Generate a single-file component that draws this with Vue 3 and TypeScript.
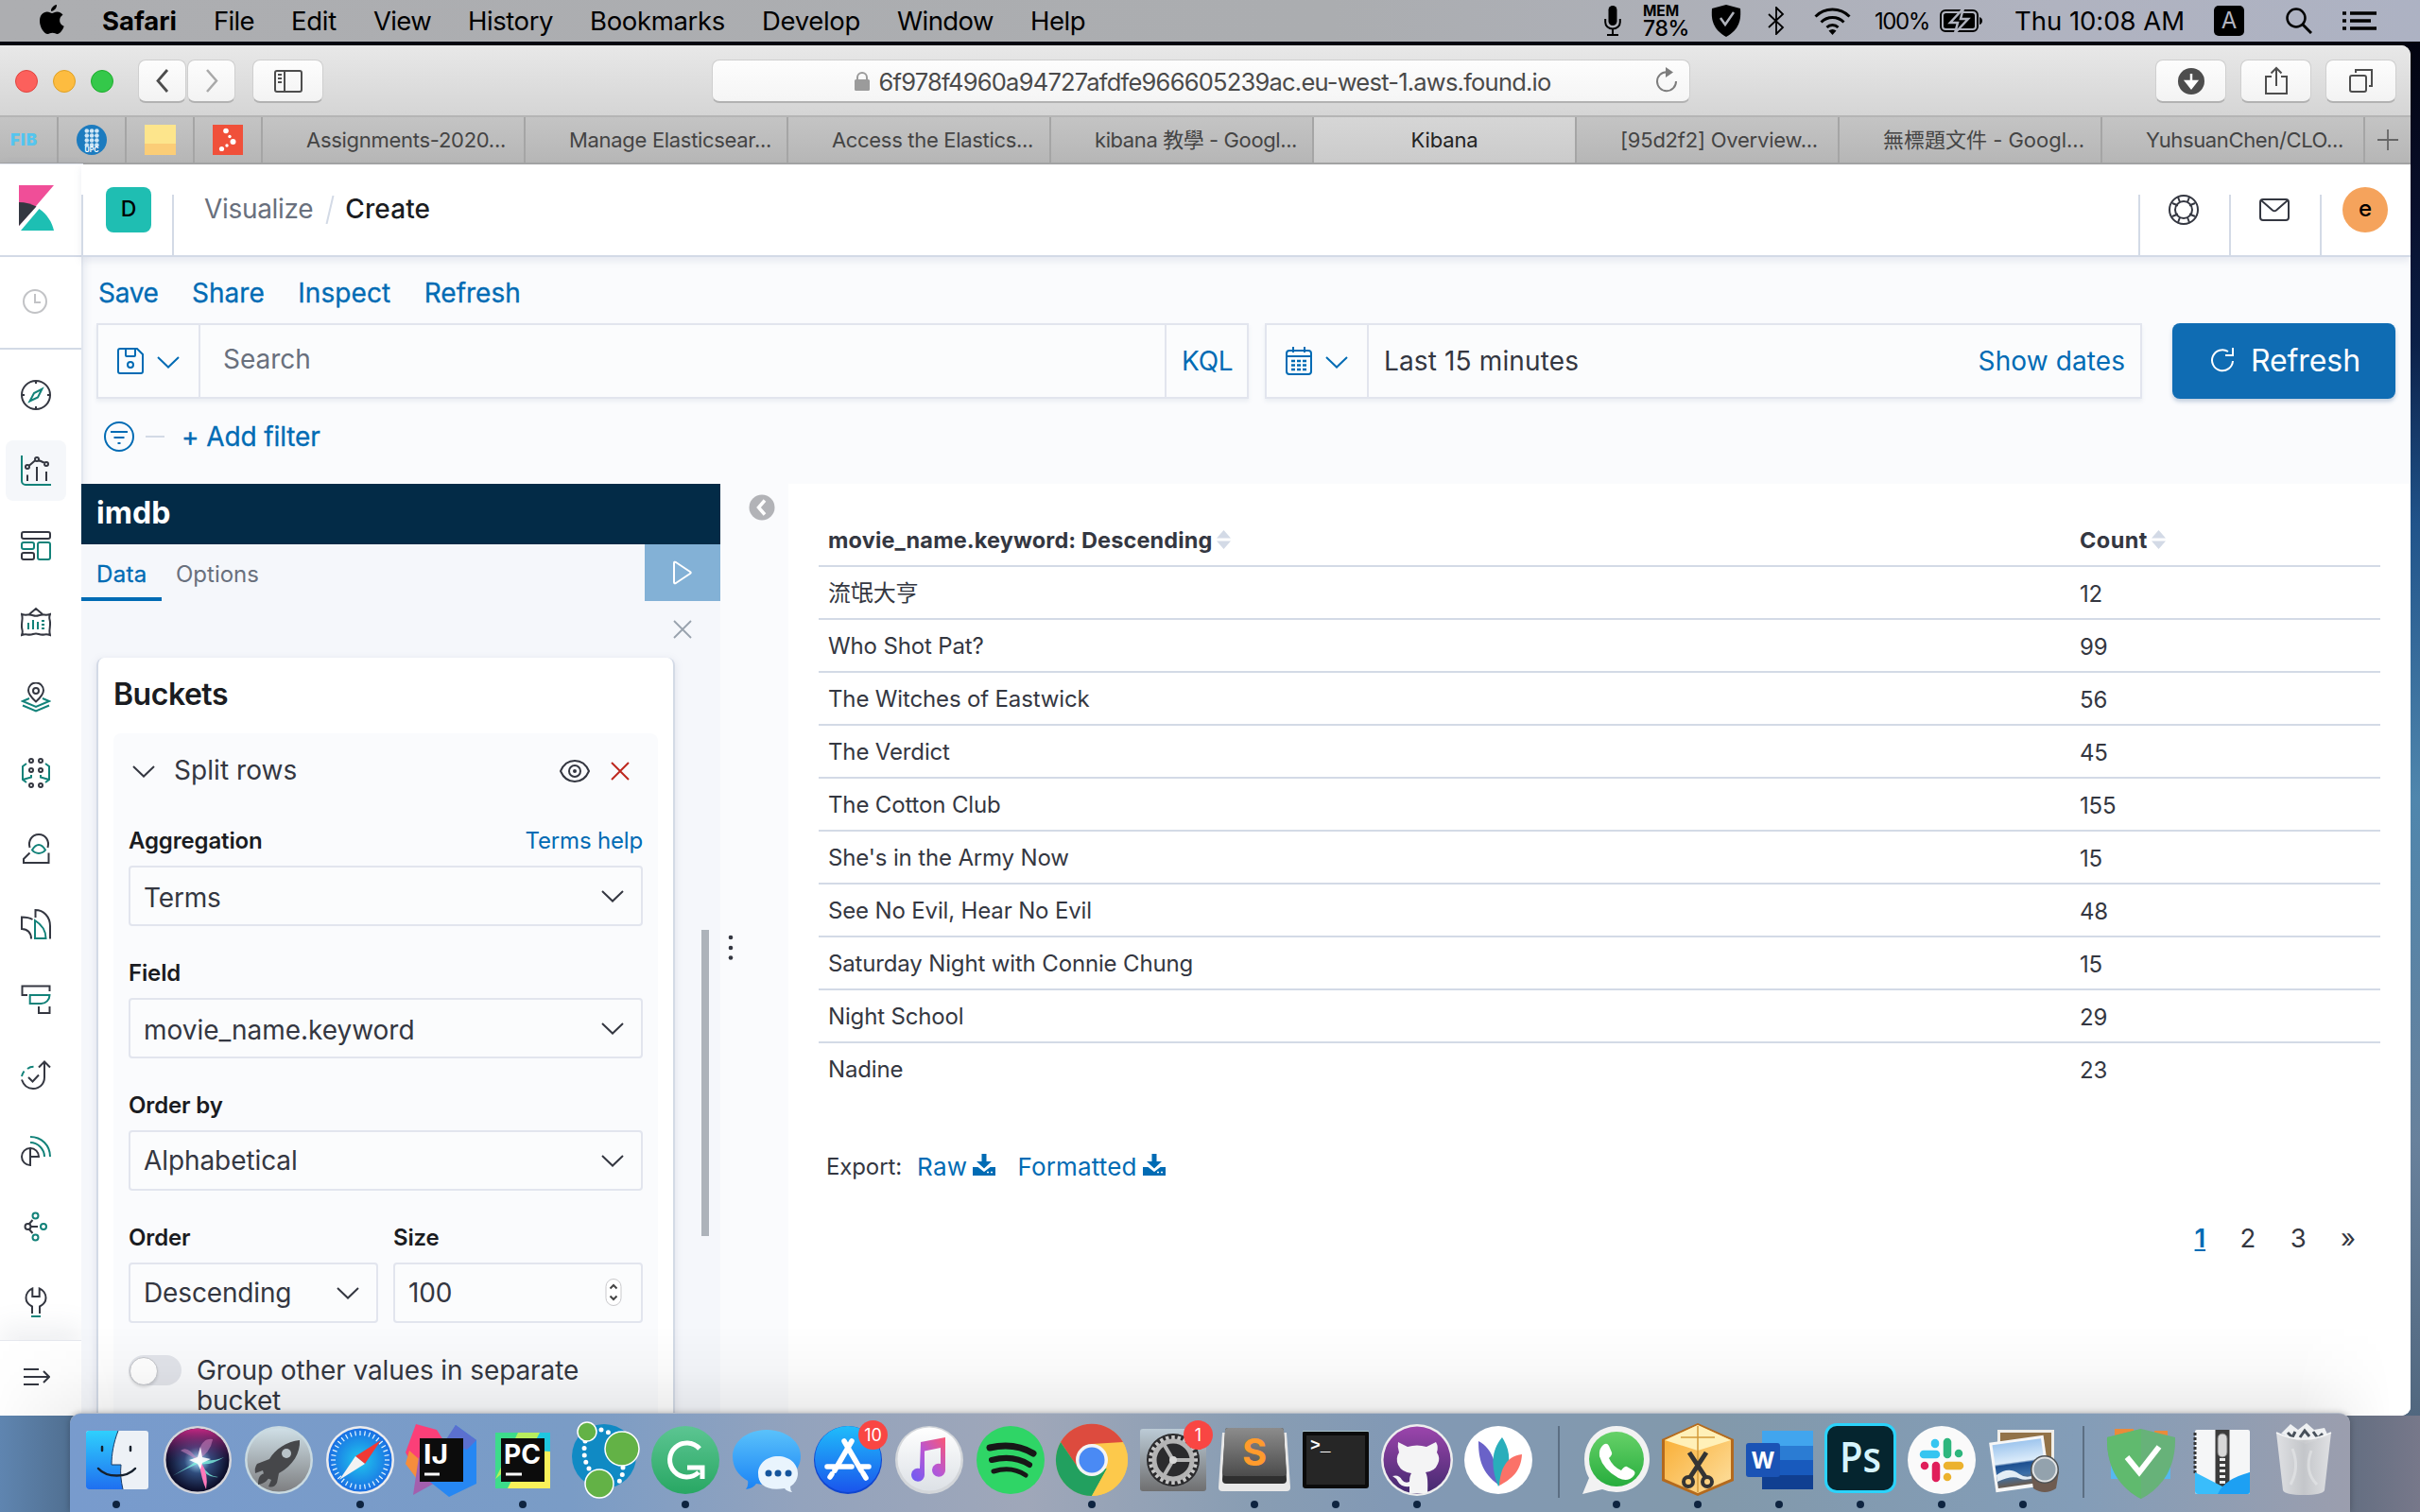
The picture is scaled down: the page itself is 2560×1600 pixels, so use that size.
<script setup lang="ts">
import type { Directive } from 'vue'

// Tunes letter-spacing so that a label occupies the given width in pixels.
const vFit: Directive<HTMLElement, number> = {
  mounted(el, binding) {
    const range = document.createRange()
    range.selectNodeContents(el)
    const width = range.getBoundingClientRect().width
    const count = (el.textContent ?? '').trim().length
    if (count > 0 && width > 0) el.style.letterSpacing = `${(binding.value - width) / count}px`
  },
}

interface Label { text: string; w: number }

const menus: Label[] = [
  { text: 'File', w: 43 }, { text: 'Edit', w: 48 }, { text: 'View', w: 61 },
  { text: 'History', w: 90 }, { text: 'Bookmarks', w: 143 }, { text: 'Develop', w: 104 },
  { text: 'Window', w: 102 }, { text: 'Help', w: 58 },
]

const tabs: (Label & { active?: boolean })[] = [
  { text: 'Assignments-2020...', w: 211 },
  { text: 'Manage Elasticsear...', w: 214 },
  { text: 'Access the Elastics...', w: 213 },
  { text: 'kibana 教學 - Googl...', w: 214 },
  { text: 'Kibana', w: 71, active: true },
  { text: '[95d2f2] Overview...', w: 209 },
  { text: '無標題文件 - Googl...', w: 213 },
  { text: 'YuhsuanChen/CLO...', w: 209 },
]

const circ = (x: number, y: number, r: number): string =>
  `M${x - r} ${y}a${r} ${r} 0 1 0 ${2 * r} 0a${r} ${r} 0 1 0 ${-2 * r} 0z`

interface NavIcon { name: string; dark: string; teal: string; active?: boolean }

const navIcons: NavIcon[] = [
  { name: 'discover', dark: circ(16, 16, 15) + 'M16 1v3M16 28v3M1 16h3M28 16h3', teal: 'M22.5 9.5l-4.5 9-8.5 4 4.5-8.5z' },
  { name: 'visualize', active: true, dark: 'M7 20.500v6.500M17 12v15M27 17v10M8.500 11l7-6M19 5l6.500 3' + circ(7, 12, 2) + circ(17, 4, 2) + circ(27, 9, 2), teal: 'M1 0v27a4 4 0 0 0 4 4h27' },
  { name: 'dashboard', dark: 'M3 1h26a2 2 0 0 1 2 2v3a2 2 0 0 1-2 2H3a2 2 0 0 1-2-2V3a2 2 0 0 1 2-2zM3 23h9a2 2 0 0 1 2 2v3a2 2 0 0 1-2 2H3a2 2 0 0 1-2-2v-3a2 2 0 0 1 2-2z', teal: 'M3 12h9a2 2 0 0 1 2 2v3a2 2 0 0 1-2 2H3a2 2 0 0 1-2-2v-3a2 2 0 0 1 2-2zM20 12h9a2 2 0 0 1 2 2v14a2 2 0 0 1-2 2h-9a2 2 0 0 1-2-2V14a2 2 0 0 1 2-2z' },
  { name: 'canvas', dark: 'M9 8l7-6 7 6M1 8q3 1 6 .6t6 .6t6 0t6-.6t6-.6q-1.200 2.800-.5 5.500t.5 5.500t-.5 5.500t.5 5.500q-3-1.200-6-.6t-6-.4t-6 0t-6 .4t-6 .6q1.200-2.800.5-5.500t-.5-5.500t.5-5.500t-.5-5.500z', teal: 'M8 17v7M13 14v10M18 16v8M22 15h3M22 19h3M22 23h3' },
  { name: 'maps', dark: 'M16 20.500c-5-4.500-8-8-8-12a8 8 0 0 1 16 0c0 4-3 7.500-8 12z' + circ(16, 9, 3), teal: 'M9 17l-7 3 14 6 14-6-7-3M2 24.500l14 6 14-6' },
  { name: 'machine learning', dark: circ(11, 3, 2) + circ(21, 3, 2) + circ(11, 13, 2) + circ(21, 13, 2) + circ(11, 29, 2) + circ(21, 29, 2), teal: 'M6 6L2 9v14l4 3M2 23l9-2.500V18M26 6l4 3v14l-4 3M30 23l-9-2.500V18' },
  { name: 'metrics', dark: 'M9.500 15c-2-7 2-14 9.500-14s11.500 7 9.500 14M9.500 20.500L3 27v4h26.500V20.500', teal: 'M12 17.500c2-3.500 4-5.500 7-5.500s5 2 7 5.500c-3.500 4.500-10.500 4.500-14 0z' },
  { name: 'logs', dark: 'M15.500 9V1C24 1 31 8 31 18v13.500M12.500 11C9 9 5 8.500 1 8.500V21c6 0 10 4 10 10.500', teal: 'M15 12v19h11.500c0-8-5-15-11.500-19z' },
  { name: 'apm', dark: 'M30.500 7V1.500h-29v9.500H7M19 23v7h11.500v-7', teal: 'M9.700 11h20.800c0 5-4 9-9 9H9.700z' },
  { name: 'uptime', dark: 'M1 20.500c2 6 6 9.500 12 9.500 7 0 12-5 12-12V2M19 7.500l6-6 6 6M8 18l4.500 4.500 6.500-7', teal: 'M1 17c.5-2 1.500-4 2.500-5.500M7 9c2-1.500 4-2.200 6.500-2.200' },
  { name: 'siem', dark: 'M10 13a9 9 0 0 0 0 18zM10 13c5 0 9 4 9 9h-9', teal: 'M10 1c12 0 21 9 21 21M10 7c8 0 15 7 15 15' },
  { name: 'graph', dark: circ(7.5, 16, 3) + 'M10.500 16h7.500M9 13l3.500-4M9 19l3.500 4', teal: circ(15.5, 4.5, 3) + circ(24, 16, 3) + circ(15.5, 27.5, 3) },
  { name: 'dev tools', dark: 'M12 28v-7.500c-4-2-6.500-5-6.500-9 0-4.500 3-8.500 6.800-10V10h7.400V1.500c3.800 1.500 6.800 5.500 6.800 10 0 4-2.500 7-6.500 9V28', teal: 'M11 31h10' },
]

interface Row { name: string; count: number }
const rows: Row[] = [
  { name: '流氓大亨', count: 12 },
  { name: 'Who Shot Pat?', count: 99 },
  { name: 'The Witches of Eastwick', count: 56 },
  { name: 'The Verdict', count: 45 },
  { name: 'The Cotton Club', count: 155 },
  { name: "She's in the Army Now", count: 15 },
  { name: 'See No Evil, Hear No Evil', count: 48 },
  { name: 'Saturday Night with Connie Chung', count: 15 },
  { name: 'Night School', count: 29 },
  { name: 'Nadine', count: 23 },
]

interface Field { label: string; value: string; w: number; help?: string }
const fields: Field[] = [
  { label: 'Aggregation', value: 'Terms', w: 81, help: 'Terms help' },
  { label: 'Field', value: 'movie_name.keyword', w: 284 },
  { label: 'Order by', value: 'Alphabetical', w: 161 },
]

interface DockApp { id: string; running?: boolean; badge?: string }
const dockGroups: DockApp[][] = [
  [
    { id: 'finder', running: true }, { id: 'siri' }, { id: 'launchpad' }, { id: 'safari', running: true },
    { id: 'intellij' }, { id: 'pycharm', running: true }, { id: 'neo4j' }, { id: 'grammarly', running: true },
    { id: 'messages' }, { id: 'appstore', badge: '10' }, { id: 'music' }, { id: 'spotify' },
    { id: 'chrome', running: true }, { id: 'settings', badge: '1' }, { id: 'sublime', running: true },
    { id: 'terminal', running: true }, { id: 'github', running: true }, { id: 'lotus' },
  ],
  [
    { id: 'whatsapp', running: true }, { id: 'box', running: true }, { id: 'word', running: true },
    { id: 'photoshop', running: true }, { id: 'slack', running: true }, { id: 'preview', running: true },
  ],
  [{ id: 'adguard' }, { id: 'zip' }, { id: 'trash' }],
]

const ticks = Array.from({ length: 36 }, (_, i) => i * 10)
const teeth = Array.from({ length: 24 }, (_, i) => i * 15)
</script>

<template>
  <div class="desktop">
    <header class="menubar">
      <svg class="apple" viewBox="0 0 26 31" width="26" height="31"><path d="M18 0c.3 3.500-2.800 6.800-6 6.800C11.700 3.600 14.800.5 18 0zM13 9c1.300 0 3-1.500 5.500-1.500 2.700 0 4.800 1.300 6 3.200-5 3-4.200 10 1.200 12.100-1 3.200-4 8.200-7 8.200-2 0-2.800-1.200-5.200-1.200S10.300 31 8.500 31C4.500 31 0 23.500 0 17.200 0 11 3.800 7.600 7.800 7.600 10.200 7.600 11.800 9 13 9z" /></svg>
      <b v-fit="79">Safari</b>
      <span v-for="m in menus" :key="m.text" v-fit="m.w">{{ m.text }}</span>
      <div class="status">
        <svg width="18" height="32" viewBox="0 0 18 32"><rect x="4.500" y="0" width="9" height="21" rx="4.500" /><path d="M1.200 14v3.500a7.800 7 0 0 0 15.600 0V14M9 25v6M3 31h12" fill="none" stroke="#000" stroke-width="2" /></svg>
        <div class="mem"><b v-fit="38">MEM</b><em v-fit="49">78%</em></div>
        <svg width="32" height="34" viewBox="0 0 32 34"><path d="M16 0l15 4c1 12-1 22-15 30C2 26 0 16 1 4z" /><path d="M10 14l5 7 9-13" fill="none" stroke="#b0b3bb" stroke-width="2.500" /></svg>
        <svg class="bt" width="18" height="30" viewBox="0 0 18 30"><path d="M1 8l15 14-7 7V1l7 7L1 22" fill="none" stroke="#000" stroke-width="1.800" /></svg>
        <svg class="wifi" width="39" height="30" viewBox="0 0 39 30"><g fill="none" stroke="#000" stroke-width="3"><path d="M1.500 10.500a25.500 25.500 0 0 1 36 0M7.500 16.500a17 17 0 0 1 24 0M13.500 22a8.500 8.500 0 0 1 12 0" /></g><path d="M15.500 25.500q4-3 8 0l-4 4.500z" /></svg>
        <span class="pct" v-fit="58">100%</span>
        <svg class="bat" width="45" height="26" viewBox="0 0 45 26"><rect x="1" y="2" width="39" height="22" rx="5" fill="none" stroke="#000" stroke-width="2" /><path d="M42 9v8q3-1 3-4t-3-4z" /><rect x="4" y="5" width="33" height="16" rx="2.500" /><path d="M25 0L11 15h8l-3 11 14-15h-8z" stroke="#b0b3bf" stroke-width="2.500" /></svg>
        <span class="clock" v-fit="180">Thu 10:08 AM</span>
        <i class="ime">A</i>
        <svg class="find" width="28" height="28" viewBox="0 0 28 28"><circle cx="11" cy="11" r="9.500" fill="none" stroke="#000" stroke-width="2.500" /><path d="M18 18l9 9" stroke="#000" stroke-width="3" /></svg>
        <svg class="lst" width="36" height="20" viewBox="0 0 36 20"><path d="M0 2h4M8 2h28M0 10h4M8 10h22M0 18h4M8 18h28" stroke="#000" stroke-width="3.600" /></svg>
      </div>
    </header>

    <div class="window">
      <div class="toolbar">
        <i class="light red" /><i class="light yellow" /><i class="light green" />
        <div class="tbtn back"><svg width="16" height="26" viewBox="0 0 16 26"><path d="M13 1L3 12.500 13 24" fill="none" stroke="#4d4d4d" stroke-width="2.800" /></svg></div>
        <div class="tbtn fwd"><svg width="16" height="26" viewBox="0 0 16 26"><path d="M3 1l10 11.500L3 24" fill="none" stroke="#a9a9a9" stroke-width="2.500" /></svg></div>
        <div class="tbtn side"><svg width="30" height="24" viewBox="0 0 30 24"><g fill="none" stroke="#4d4d4d" stroke-width="2"><rect x="1" y="1" width="28" height="22" rx="2" /><path d="M11 1v22M4 5h4M4 9h4M4 13h4" /></g></svg></div>
        <div class="url">
          <svg width="18" height="20" viewBox="0 0 18 20"><path d="M4 9V6a5 5 0 0 1 10 0v3" fill="none" stroke="#9b9b9b" stroke-width="2" /><rect x="1" y="8" width="16" height="12" rx="1.500" fill="#9b9b9b" /></svg>
          <span v-fit="711">6f978f4960a94727afdfe966605239ac.eu-west-1.aws.found.io</span>
          <svg class="reload" width="24" height="27" viewBox="0 0 24 27"><path d="M12 5.200A10 10 0 1 0 22 15" fill="none" stroke="#7d7d7d" stroke-width="2" /><path d="M11 0l8 5.500-8 5.500z" fill="#7d7d7d" /></svg>
        </div>
        <div class="tbtn act"><svg width="28" height="28" viewBox="0 0 28 28"><circle cx="14" cy="14" r="14" fill="#4d4d4d" /><path d="M14 6v12M8.500 14l5.500 7 5.500-7z" stroke="#fff" stroke-width="2.500" fill="#fff" /></svg></div>
        <div class="tbtn act"><svg width="24" height="32" viewBox="0 0 24 32"><path d="M7 11H1v18h22V11h-6M12 21V2M6.500 7.500L12 2l5.500 5.500" fill="none" stroke="#4d4d4d" stroke-width="2" /></svg></div>
        <div class="tbtn act"><svg width="26" height="26" viewBox="0 0 26 26"><g fill="none" stroke="#4d4d4d" stroke-width="2"><rect x="1" y="7" width="17" height="17" rx="2" /><path d="M7 4V1h17v17h-3" /></g></svg></div>
      </div>

      <div class="tabbar">
        <div class="pin fib"><b v-fit="29">FIB</b></div>
        <div class="pin"><svg width="32" height="32" viewBox="0 0 32 32"><circle cx="16" cy="16" r="16" fill="#1c7bbf" /><g fill="#cfe6f5"><template v-for="r in 4" :key="r"><circle v-for="c in 3" :key="c" :cx="5.500 + c * 5.300" :cy="1.500 + r * 5" r="2.300" /></template></g><text x="16" y="28.500" font-size="7" font-weight="700" text-anchor="middle" fill="#fff">UPC</text></svg></div>
        <div class="pin"><svg width="33" height="32" viewBox="0 0 33 32"><path d="M0 0h33v20H0z" fill="#fde58c" /><path d="M0 20h33v12H0z" fill="#fbcd77" /></svg></div>
        <div class="pin"><svg width="32" height="32" viewBox="0 0 32 32"><path d="M0 0h32v32H0z" fill="#f0503a" /><g fill="#fff"><circle cx="14" cy="6.500" r="2.800" /><circle cx="18" cy="12.500" r="1.700" /><circle cx="21.500" cy="18" r="3" /><circle cx="15" cy="22" r="1.700" /><circle cx="9.500" cy="25.500" r="2.600" /></g></svg></div>
        <div v-for="t in tabs" :key="t.text" class="tab" :class="{ active: t.active }"><span v-fit="t.w">{{ t.text }}</span></div>
        <div class="plus"><svg width="22" height="22" viewBox="0 0 22 22"><path d="M11 0v22M0 11h22" stroke="#666" stroke-width="1.800" /></svg></div>
      </div>

      <div class="kibana">
        <nav class="rail">
          <div class="logo"><svg width="37" height="48" viewBox="0 0 37 48"><path d="M0 0h37L0 43z" fill="#f04e98" /><path d="M0 18c7 0 13 2 18.500 4.500L0 43z" fill="#343741" /><path d="M21.500 25C30 31 35 39 37 48H2z" fill="#1dbfb3" /></svg></div>
          <div class="recent"><svg width="28" height="28" viewBox="0 0 28 28"><g fill="none" stroke="#c2c3c6" stroke-width="2"><circle cx="14" cy="14" r="12" /><path d="M14 6v9h6" /></g></svg></div>
          <div v-for="n in navIcons" :key="n.name" class="nav" :class="{ on: n.active }">
            <svg width="32" height="32" viewBox="0 0 32 32" fill="none" stroke-width="2"><path :d="n.dark" stroke="#343741" /><path :d="n.teal" stroke="#128279" /></svg>
          </div>
          <div class="expand"><svg width="28" height="20" viewBox="0 0 28 20"><path d="M0 2h16M0 10h26M0 18h16M21 4l6 6-6 6" fill="none" stroke="#343741" stroke-width="2" /></svg></div>
        </nav>

        <div class="page">
          <div class="crumbs">
            <div class="space"><b>D</b></div>
            <i class="vline" />
            <span class="c1" v-fit="114">Visualize</span>
            <svg class="slash" width="10" height="30" viewBox="0 0 10 30"><path d="M8.500 0L1.500 30" stroke="#d3dae6" stroke-width="2" /></svg>
            <span class="c2" v-fit="89">Create</span>
            <div class="tools">
              <div class="tool"><svg width="32" height="32" viewBox="0 0 32 32"><g fill="none" stroke="#343741" stroke-width="2"><circle cx="16" cy="16" r="15" /><circle cx="16" cy="16" r="9" /><path d="M10 2.500l2 5.500M4 9l6 2.500M22 2.500L20 8M28 9l-6 2.500M10 29.500l2-5.500M4 23l6-2.500M22 29.500L20 24M28 23l-6-2.500" /></g></svg></div>
              <div class="tool"><svg width="32" height="24" viewBox="0 0 32 24"><g fill="none" stroke="#343741" stroke-width="2"><rect x="1" y="1" width="30" height="22" rx="3" /><path d="M2 2l12 10.500q2 1.500 4 0L30 2" /></g></svg></div>
              <div class="tool"><b class="avatar">e</b></div>
            </div>
          </div>

          <div class="links"><a v-fit="63">Save</a><a v-fit="76">Share</a><a v-fit="97">Inspect</a><a v-fit="101">Refresh</a></div>

          <div class="query">
            <div class="box search">
              <div class="pre"><svg width="28" height="28" viewBox="0 0 28 28"><g fill="none" stroke="#006bb4" stroke-width="2"><path d="M3 1h18l6 6v18a2 2 0 0 1-2 2H3a2 2 0 0 1-2-2V3a2 2 0 0 1 2-2z" /><path d="M9 1v7a1 1 0 0 0 1 1h8a1 1 0 0 0 1-1V1" /><circle cx="14" cy="18" r="3" /></g></svg><svg class="chev" width="24" height="13" viewBox="0 0 24 13"><path d="M1 1l11 10.500L23 1" fill="none" stroke="#006bb4" stroke-width="2" /></svg></div>
              <span class="ph" v-fit="92">Search</span>
              <a class="kql"><span v-fit="54">KQL</span></a>
            </div>
            <div class="box date">
              <div class="pre cal"><svg width="28" height="30" viewBox="0 0 28 30"><g fill="none" stroke="#006bb4" stroke-width="2"><rect x="1" y="4" width="26" height="25" rx="3" /><path d="M1 10h26M8 0v6M20 0v6" /></g><path d="M6 15h4M12 15h4M18 15h4M6 19.500h4M12 19.500h4M18 19.500h4M6 24h4M12 24h4M18 24h4" stroke="#006bb4" stroke-width="2.500" /></svg><svg class="chev" width="24" height="13" viewBox="0 0 24 13"><path d="M1 1l11 10.500L23 1" fill="none" stroke="#006bb4" stroke-width="2" /></svg></div>
              <span class="range" v-fit="204">Last 15 minutes</span>
              <a class="show" v-fit="154">Show dates</a>
            </div>
            <button class="refresh"><svg width="26" height="26" viewBox="0 0 26 26"><path d="M19 4A11 11 0 1 0 24 14M24 0v8h-8" fill="none" stroke="#fff" stroke-width="2" /></svg><span v-fit="116">Refresh</span></button>
          </div>

          <div class="filters">
            <svg width="32" height="32" viewBox="0 0 32 32"><g fill="none" stroke="#006bb4" stroke-width="2"><circle cx="16" cy="16" r="15" /><path d="M7 11h18M10.500 17h11M14.500 23h3" /></g></svg>
            <i class="dash" />
            <a v-fit="145">+ Add filter</a>
          </div>

          <div class="work">
            <section class="editor">
              <div class="title"><b v-fit="78">imdb</b></div>
              <div class="etabs">
                <span class="on"><em v-fit="53">Data</em></span>
                <span class="off" v-fit="87">Options</span>
                <button class="play"><svg width="22" height="26" viewBox="0 0 22 26"><path d="M2 3v20q0 2 2 1l15-10q1.500-1 0-2L4 2Q2 1 2 3z" fill="none" stroke="#fff" stroke-width="2" /></svg></button>
              </div>
              <div class="closer"><svg width="20" height="20" viewBox="0 0 20 20"><path d="M1 1l18 18M19 1L1 19" stroke="#98a2ad" stroke-width="1.800" /></svg></div>
              <div class="card">
                <h3><span v-fit="120">Buckets</span></h3>
                <div class="inner">
                  <div class="split">
                    <svg width="24" height="13" viewBox="0 0 24 13"><path d="M1 1l11 10.500L23 1" fill="none" stroke="#343741" stroke-width="2" /></svg>
                    <span v-fit="129">Split rows</span>
                    <svg class="eye" width="32" height="24" viewBox="0 0 32 24"><g fill="none" stroke="#343741" stroke-width="2"><path d="M1 12C4 5 9.500 1 16 1s12 4 15 11c-3 7-8.500 11-15 11S4 19 1 12z" /><circle cx="16" cy="12" r="6" /></g><circle cx="16" cy="12" r="2" fill="#343741" /></svg>
                    <svg class="del" width="20" height="20" viewBox="0 0 20 20"><path d="M1 1l18 18M19 1L1 19" stroke="#bd271e" stroke-width="2" /></svg>
                  </div>
                  <div v-for="f in fields" :key="f.label" class="field">
                    <div class="label"><b>{{ f.label }}</b><a v-if="f.help" v-fit="123">{{ f.help }}</a></div>
                    <div class="select"><span v-fit="f.w">{{ f.value }}</span><svg width="24" height="13" viewBox="0 0 24 13"><path d="M1 1l11 10.500L23 1" fill="none" stroke="#343741" stroke-width="2" /></svg></div>
                  </div>
                  <div class="pair">
                    <div class="field"><div class="label"><b>Order</b></div><div class="select"><span v-fit="155">Descending</span><svg width="24" height="13" viewBox="0 0 24 13"><path d="M1 1l11 10.500L23 1" fill="none" stroke="#343741" stroke-width="2" /></svg></div></div>
                    <div class="field"><div class="label"><b>Size</b></div><div class="select num"><span>100</span><svg width="18" height="32" viewBox="0 0 18 32"><rect x="1" y="1.500" width="16" height="28" rx="8" fill="#fff" stroke="#c9c9cc" /><path d="M5.500 11.500L9 8l3.500 3.500M5.500 19.500L9 23l3.500-3.500" fill="none" stroke="#444" stroke-width="2" /></svg></div></div>
                  </div>
                  <div class="toggle"><i class="sw" /><p><span v-fit="400">Group other values in separate</span><br>bucket</p></div>
                </div>
              </div>
              <i class="scroll" />
            </section>

            <div class="gutter">
              <svg class="fold" width="28" height="28" viewBox="0 0 28 28"><circle cx="14" cy="14" r="13.500" fill="#b2b3b7" /><path d="M17 6.500L10.500 14l6.500 7.500" fill="none" stroke="#fff" stroke-width="3.500" /></svg>
              <svg class="grip" width="6" height="28" viewBox="0 0 6 28" fill="#343741"><circle cx="3" cy="3" r="2.300" /><circle cx="3" cy="14" r="2.300" /><circle cx="3" cy="24.500" r="2.300" /></svg>
            </div>

            <section class="viz">
              <div class="tr th">
                <span><b v-fit="402">movie_name.keyword: Descending</b><svg width="15" height="20" viewBox="0 0 15 20"><path d="M7.500 0L15 8.500H0zM7.500 20L0 11.500h15z" fill="#d3dae6" /></svg></span>
                <span><b v-fit="71">Count</b><svg width="15" height="20" viewBox="0 0 15 20"><path d="M7.500 0L15 8.500H0zM7.500 20L0 11.500h15z" fill="#d3dae6" /></svg></span>
              </div>
              <div v-for="r in rows" :key="r.name" class="tr"><span>{{ r.name }}</span><span class="n">{{ r.count }}</span></div>
              <div class="export">
                <span v-fit="79">Export:</span>
                <a><em v-fit="53">Raw</em><svg width="24" height="23" viewBox="0 0 24 23"><path d="M9.500 0h5v8h5.500l-8 7.500L4 8h5.500zM0 14h5.500l6.500 5 6.500-5H24v9H0z" fill="#006bb4" /><path d="M15 19.500h2M19 19.500h2" stroke="#fff" stroke-width="1.500" /></svg></a>
                <a><em v-fit="125">Formatted</em><svg width="24" height="23" viewBox="0 0 24 23"><path d="M9.500 0h5v8h5.500l-8 7.500L4 8h5.500zM0 14h5.500l6.500 5 6.500-5H24v9H0z" fill="#006bb4" /><path d="M15 19.500h2M19 19.500h2" stroke="#fff" stroke-width="1.500" /></svg></a>
              </div>
              <div class="pager"><b>1</b><span>2</span><span>3</span><span>»</span></div>
            </section>
          </div>
        </div>
      </div>
      <div class="shade" />
    </div>

    <div class="dock">
      <svg class="defs" width="0" height="0">
        <defs>
          <linearGradient id="gBlue" x1="0" y1="0" x2="0" y2="1"><stop offset="0" stop-color="#2fd0fd" /><stop offset="1" stop-color="#1f6ff0" /></linearGradient>
          <linearGradient id="gMsg" x1="0" y1="0" x2="0" y2="1"><stop offset="0" stop-color="#5ac2fb" /><stop offset="1" stop-color="#1a83f5" /></linearGradient>
          <linearGradient id="gStore" x1="0" y1="0" x2="0" y2="1"><stop offset="0" stop-color="#20bdfb" /><stop offset="1" stop-color="#1a55ec" /></linearGradient>
          <linearGradient id="gWhite" x1="0" y1="0" x2="0" y2="1"><stop offset="0" stop-color="#fff" /><stop offset="1" stop-color="#dde1e6" /></linearGradient>
          <linearGradient id="gRocket" x1="0" y1="0" x2="0" y2="1"><stop offset="0" stop-color="#cfdfe6" /><stop offset="1" stop-color="#7e7f81" /></linearGradient>
          <radialGradient id="gSiri"><stop offset="0" stop-color="#fff" /><stop offset=".16" stop-color="#7fb4d8" /><stop offset=".42" stop-color="#2f4c7c" /><stop offset="1" stop-color="#0b0b26" /></radialGradient>
          <linearGradient id="gSiriTop" x1="0" y1="0" x2="0" y2="1"><stop offset="0" stop-color="#d92b8c" stop-opacity=".9" /><stop offset=".55" stop-color="#401b5a" stop-opacity="0" /></linearGradient>
          <radialGradient id="gSafari"><stop offset="0" stop-color="#20c8ee" /><stop offset="1" stop-color="#1a6fe3" /></radialGradient>
          <linearGradient id="gGreen" x1="0" y1="0" x2="0" y2="1"><stop offset="0" stop-color="#5cc592" /><stop offset="1" stop-color="#28a763" /></linearGradient>
          <linearGradient id="gNote" x1="0" y1="1" x2="1" y2="0"><stop offset="0" stop-color="#6a5cf5" /><stop offset=".5" stop-color="#b557d6" /><stop offset="1" stop-color="#fb5774" /></linearGradient>
          <linearGradient id="gGit" x1="0" y1="0" x2="0" y2="1"><stop offset="0" stop-color="#9c45ac" /><stop offset="1" stop-color="#43296f" /></linearGradient>
          <linearGradient id="gWa" x1="0" y1="0" x2="0" y2="1"><stop offset="0" stop-color="#66d168" /><stop offset="1" stop-color="#27ad3d" /></linearGradient>
          <linearGradient id="gGear" x1="0" y1="0" x2="0" y2="1"><stop offset="0" stop-color="#bccbd6" /><stop offset="1" stop-color="#6f6f70" /></linearGradient>
          <linearGradient id="gKey" x1="0" y1="0" x2="0" y2="1"><stop offset="0" stop-color="#8c8c8c" /><stop offset="1" stop-color="#4c4c4c" /></linearGradient>
          <linearGradient id="gBox" x1="0" y1="0" x2="1" y2="1"><stop offset="0" stop-color="#f9aa2c" /><stop offset="1" stop-color="#fde0a0" /></linearGradient>
          <linearGradient id="gSea" x1="0" y1="0" x2="0" y2="1"><stop offset="0" stop-color="#9fc6ee" /><stop offset=".45" stop-color="#dcecfa" /><stop offset=".5" stop-color="#1c4f90" /><stop offset=".75" stop-color="#3d70a8" /><stop offset="1" stop-color="#6a5c50" /></linearGradient>
          <linearGradient id="gCan" x1="0" y1="0" x2="1" y2="0"><stop offset="0" stop-color="#e3e4e6" /><stop offset=".5" stop-color="#c6c8cb" /><stop offset="1" stop-color="#e3e4e6" /></linearGradient>
        </defs>
      </svg>
      <template v-for="(group, gi) in dockGroups" :key="gi">
        <i v-if="gi > 0" class="dsep" />
        <div v-for="app in group" :key="app.id" class="app">
          <svg width="86" height="104" viewBox="-43 -49 86 104">
            <g v-if="app.id === 'finder'">
              <rect x="-32" y="-31" width="66" height="62" rx="3" fill="#edf1f6" />
              <path d="M-29-31H2C-3-18-5-6-5 5H5C4 14 5 22 7 31h-36q-3 0-3-3v-56q0-3 3-3z" fill="url(#gBlue)" />
              <path d="M2-31C-3-18-5-6-5 5H5C4 14 5 22 7 31" fill="none" stroke="#1b3c66" stroke-width="1" />
              <path d="M-15-14v4M15-14v4M-19 9C-10 19 11 19 20 9" fill="none" stroke="#16202c" stroke-width="2.500" stroke-linecap="round" />
            </g>
            <g v-else-if="app.id === 'siri'">
              <circle r="36" fill="#d5d5da" /><circle r="33.500" fill="url(#gSiri)" /><circle r="33.500" fill="url(#gSiriTop)" />
              <path d="M-27 17Q-4 4 0 0Q17 2 28-3Q14 6 3 4Q12 18 22 18Q10 20 0 4Q-14 10-27 17z" fill="#7df0dd" opacity=".8" />
              <path d="M0 0Q-10-16-18-10Q-10-6 0 0Q2-24 16-22Q14-8 0 0z" fill="#d98cc8" opacity=".5" />
              <path d="M2 4Q4 20 9 31Q12 15 4 3z" fill="#ff79bb" /><path d="M-9 0L0-3 3-14 5-3 14-1 5 3 3 10 0 4z" fill="#fff" opacity=".9" />
            </g>
            <g v-else-if="app.id === 'launchpad'">
              <circle r="36" fill="#c9dae1" /><circle r="33.500" fill="url(#gRocket)" />
              <path d="M22-21C8-20-4-11-10-1l-13 5q-3 4-2 10l8-3 2 7 7 3-3 7q6 2 9-4l2-10C15 6 23-8 22-21z" fill="#46474a" /><circle cx="8" cy="-7" r="5" fill="#b9c3c8" /><path d="M-13 14c-8 0-9 6-9 12 7-1 11-5 12-9z" fill="#46474a" />
            </g>
            <g v-else-if="app.id === 'safari'">
              <circle r="36" fill="#ececee" /><circle r="33.500" fill="url(#gSafari)" />
              <path v-for="t in ticks" :key="t" d="M0-31v5" stroke="#e6f5ff" stroke-width="1.200" :transform="`rotate(${t})`" />
              <path d="M22-21L5 4-5-4z" fill="#f03934" /><path d="M-22 21L5 4-5-4z" fill="#f3f3f3" />
            </g>
            <g v-else-if="app.id === 'intellij'">
              <path d="M-27-38l22 6 9 14-30 32-12-22z" fill="#fb3f78" /><path d="M-34-10l-4 14 12 16 10-14z" fill="#f58d3c" />
              <path d="M-30 37l6-40 30 20z" fill="#a35fae" /><path d="M15-37l22 16v46L8 39-16 20 4-18z" fill="#2687f3" /><path d="M15-37l22 16-10 10-24-8z" fill="#5b70cf" />
              <rect x="-23" y="-23" width="46" height="46" fill="#0c0c0c" />
              <text x="-19" y="4" font-size="28" font-weight="700" fill="#fff" textLength="26" lengthAdjust="spacingAndGlyphs">IJ</text><path d="M-18 15H-2" stroke="#fff" stroke-width="3" />
            </g>
            <g v-else-if="app.id === 'pycharm'">
              <rect x="-29" y="-29" width="58" height="59" fill="#3ddc8b" /><path d="M8-29h21v21H8z" fill="#1fc7e0" /><path d="M-5-29H18L8-10-29 20z" fill="#b8ee5d" /><path d="M29-9v39h-45l10-20 20-20z" fill="#f8f159" />
              <rect x="-23" y="-23" width="46" height="46" fill="#0c0c0c" />
              <text x="-20" y="4" font-size="28" font-weight="700" fill="#fff" textLength="39" lengthAdjust="spacingAndGlyphs">PC</text><path d="M-18 15H-1" stroke="#fff" stroke-width="3" />
            </g>
            <g v-else-if="app.id === 'neo4j'">
              <circle r="34" cy="-4" fill="#108ac4" />
              <path d="M-3-32Q4-30 9-27M-20-20q-4 22 8 34M20 8q0 14-8 18" fill="none" stroke="#fff" stroke-width="5" stroke-linecap="round" stroke-dasharray="0 7.500" />
              <g fill="#63b246" stroke="#fff" stroke-width="1.500"><circle cx="-18" cy="-30" r="10" /><circle cx="19" cy="-12" r="18" /><circle cx="-5" cy="25" r="15" /></g>
            </g>
            <g v-else-if="app.id === 'grammarly'"><circle r="36" fill="url(#gGreen)" /><path d="M15-12A18 18 0 1 0 14 13M2 8h16v12" fill="none" stroke="#fff" stroke-width="5" /></g>
            <g v-else-if="app.id === 'messages'">
              <path d="M0-32c20 0 36 12 36 28S20 26 0 26q-6 0-11-1-3 5-11 6 3-4 2-9Q-36 13-36-4C-36-20-20-32 0-32z" fill="url(#gMsg)" />
              <path d="M12-4c12 0 21 8 21 18 0 6-3 11-8 14q0 4 2 6-6-1-8-4-28 4-28-16C-9 4 0-4 12-4z" fill="#e9f4fd" /><g fill="#16559c"><circle cx="2" cy="14" r="3.500" /><circle cx="12" cy="14" r="3.500" /><circle cx="23" cy="14" r="3.500" /></g>
            </g>
            <g v-else-if="app.id === 'appstore'"><circle r="36" fill="#0f45cf" /><circle r="35" cy="-1" fill="url(#gStore)" /><path d="M4-20L-14 11M-4-20L14 11M-22 7H4M14 7h8M-17 15l-2 3M16 14l3 5" stroke="#fff" stroke-width="5.500" stroke-linecap="round" /></g>
            <g v-else-if="app.id === 'music'"><circle r="36" fill="#d3d6da" /><circle r="33.500" cy="-1" fill="url(#gWhite)" /><path d="M-9-19L17-24V10a7 7 0 1 1-5-6V-13L-5-9.500V15a7 7 0 1 1-5-6z" fill="url(#gNote)" /></g>
            <g v-else-if="app.id === 'spotify'"><circle r="36" fill="#2fd566" /><g fill="none" stroke="#171717" stroke-linecap="round"><path d="M-22-13Q4-19 24-7" stroke-width="7" /><path d="M-20 0Q3-6 20 5" stroke-width="6" /><path d="M-18 12Q1 6 16 16" stroke-width="5" /></g></g>
            <g v-else-if="app.id === 'chrome'">
              <circle r="38" fill="#fdc94b" /><path d="M-33-19A38 38 0 0 1 33-19L0-17-15 8z" fill="#dd4b3e" /><path d="M-33-19A38 38 0 0 0 0 38L16 9-12 12z" fill="#22a05f" /><path d="M0 38A38 38 0 0 0 34-17H0L16 9z" fill="#fdc94b" />
              <circle r="17" fill="#f4f4f4" /><circle r="13.500" fill="#4a8af4" />
            </g>
            <g v-else-if="app.id === 'settings'">
              <rect x="-35" y="-33" width="70" height="66" rx="3" fill="url(#gGear)" /><circle r="28" fill="#2b2b2d" />
              <path v-for="t in teeth" :key="t" d="M0-26v6" stroke="#c6c6c6" stroke-width="3.500" :transform="`rotate(${t})`" />
              <circle r="20" fill="none" stroke="#b4b4b4" stroke-width="5" /><path d="M0 0h19M0 0l-10-17M0 0l-10 17" stroke="#b4b4b4" stroke-width="4" /><circle r="4" fill="#d6d6d6" />
            </g>
            <g v-else-if="app.id === 'sublime'">
              <path d="M-34-29h68l4 58q0 4-4 4h-68q-4 0-4-4z" fill="#e8e8e8" /><path d="M-28-34h56q3 0 3 3l3 52q0 4-4 4h-60q-4 0-4-4l3-52q0-3 3-3z" fill="#2f2f2f" /><path d="M-28-34h56q3 0 3 3l3 44q0 4-4 4h-60q-4 0-4-4l3-44q0-3 3-3z" fill="url(#gKey)" />
              <text y="6" font-size="40" font-weight="700" text-anchor="middle" fill="#ff9b2d">S</text>
            </g>
            <g v-else-if="app.id === 'terminal'"><rect x="-35" y="-31" width="70" height="61" rx="3" fill="#0b0b0b" /><rect x="-31" y="-26" width="62" height="52" fill="#262626" /><path d="M-35-30.500h70" stroke="#a7c0c8" /><text x="-27" y="-10" font-size="18" font-weight="700" fill="#fff" class="mono">&gt;_</text></g>
            <g v-else-if="app.id === 'github'">
              <circle r="38" fill="#eee" /><circle r="35.500" fill="url(#gGit)" />
              <path d="M-20-19l10 5q10-3 20 0l10-5q3 5 1 11 4 6 1 12-3 8-13 9 3 4 2 22H-8V28q-9 1-12-5-2-4-6-6 7-2 10 4 3 4 8 2 0-6 2-9-10-1-14-9-3-7 1-13-2-6-1-11z" fill="#f4f4f5" />
            </g>
            <g v-else-if="app.id === 'lotus'"><circle r="36" fill="#fff" /><path d="M-21-20C-6-12-2 4 0 26-17 14-21 0-21-20z" fill="#6a62c8" /><path d="M4-24C16-6 12 12 0 28-8 8-8-10 4-24z" fill="#29aebb" /><path d="M25-6C24 12 14 20 1 27 2 10 8-4 25-6z" fill="#fb7268" /></g>
            <g v-else-if="app.id === 'whatsapp'">
              <path d="M0-36c20 0 35 15 35 35S20 34 0 34q-8 0-15-3l-21 5 7-17q-5-8-5-20C-34-21-19-36 0-36z" fill="#f2f2f2" /><circle r="29" cy="-1" fill="url(#gWa)" />
              <path d="M-14-16q4-3 6 1l3 7q1 2-3 6 4 9 13 13 4-5 6-4l7 4q3 2 0 6-6 7-16 2Q-14 10-18-4q-1-8 4-12z" fill="#fff" />
            </g>
            <g v-else-if="app.id === 'box'">
              <path d="M0-39l38 17v44L0 38l-38-16v-44z" fill="#b46a1d" /><path d="M0-37l35 16v41L0 35l-35-15v-41z" fill="url(#gBox)" /><path d="M0-37l35 16L0-10l-35-11z" fill="#fff0b8" /><path d="M0-36v26M-18-24h36M0-10v44" stroke="#d39b3a" stroke-width="1.500" />
              <path d="M-9-8L8 18M9-8L-8 18" stroke="#343434" stroke-width="5" /><g fill="none" stroke="#343434" stroke-width="4"><circle cx="-10" cy="23" r="5" /><circle cx="10" cy="23" r="5" /></g>
            </g>
            <g v-else-if="app.id === 'word'"><path d="M-18-31h54v16h-54z" fill="#41a5ee" /><path d="M-18-15h54V0h-54z" fill="#2b7cd3" /><path d="M-18 0h54v16h-54z" fill="#185abd" /><path d="M-18 16h54v15h-54z" fill="#103f91" /><rect x="-35" y="-18" width="36" height="36" rx="3" fill="#1a53b5" /><text x="-17" y="9" font-size="24" font-weight="700" text-anchor="middle" fill="#fff">W</text></g>
            <g v-else-if="app.id === 'photoshop'"><rect x="-38" y="-39" width="76" height="74" rx="13" fill="#2bd3fb" /><rect x="-35" y="-36" width="70" height="68" rx="10" fill="#05252f" /><text y="13" font-size="46" font-weight="600" text-anchor="middle" textLength="44" lengthAdjust="spacingAndGlyphs" fill="#d6f4fd" class="ps">Ps</text></g>
            <g v-else-if="app.id === 'slack'">
              <circle r="36" fill="#fafafa" />
              <g stroke-width="8.500" stroke-linecap="round" fill="none"><path d="M-7-17v-1M-19-6h13" stroke="#36c5f0" /><path d="M6-19V-6M18-7v0" stroke="#2eb67d" /><path d="M-18 6h0M-6 6v13" stroke="#e01e5a" /><path d="M6 18h0M6 6h13" stroke="#ecb22e" /></g>
            </g>
            <g v-else-if="app.id === 'preview'">
              <rect x="-27" y="-32" width="60" height="50" fill="#f0eee9" /><rect x="-24" y="-29" width="54" height="44" fill="#927348" />
              <g transform="rotate(-8)"><rect x="-33" y="-23" width="58" height="53" fill="#f7f7f7" /><rect x="-30" y="-20" width="52" height="46" fill="url(#gSea)" /><path d="M-30 12q14-8 24 2t28-3v6q-20 7-28 2t-24 0z" fill="#e3edf5" /></g>
              <path d="M8 12h30l-3 18q-12 8-24 0z" fill="#6e5b50" /><circle cx="23" cy="10" r="15" fill="#4e5254" /><circle cx="23" cy="10" r="12.500" fill="#93a2ad" stroke="#e1e3e4" stroke-width="2" />
            </g>
            <g v-else-if="app.id === 'adguard'"><path d="M-28-33h20v10h-20zM14-31h14v8H14z" fill="#ea8b3a" /><path d="M-32 0h63v20h-63z" fill="#56b8ef" /><path d="M0-33l36 9C37 8 22 30 0 41-22 30-37 8-36-24z" fill="#67b279" /><path d="M0-33v74C-22 30-37 8-36-24z" fill="#60ba6e" /><path d="M-15-3L-2 13 19-14" fill="none" stroke="#fff" stroke-width="6" /></g>
            <g v-else-if="app.id === 'zip'"><rect x="-29" y="-32" width="58" height="68" rx="2" fill="#f5f6f7" /><path d="M-29-29v44" stroke="#333" stroke-width="3" stroke-dasharray="3 2" /><path d="M0-32v62" stroke="#3b3b3b" stroke-width="15" /><path d="M0-26v54" stroke="#eee" stroke-width="6" stroke-dasharray="3 3" /><rect x="-5" y="-28" width="10" height="25" rx="5" fill="#d7d7d7" stroke="#777" /><path d="M-29 13L0 28l29-15v20q0 3-3 3h-52q-3 0-3-3z" fill="#39bdfb" /><path d="M29 13Q2 20-5 36h31q3 0 3-3z" fill="#1da0f3" /></g>
            <g v-else-if="app.id === 'trash'"><path d="M-24-28l10-10 8 6 9-7 8 7 11-2 4 9-24 8z" fill="#eef0f2" /><path d="M-17-29l5 5 3-6M-4-24l5-7 5 6M10-30l5 7 5-5" fill="none" stroke="#48515b" stroke-width="3" /><path d="M-29-29Q0-15 29-29L22 32q-2 5-22 5t-22-5z" fill="url(#gCan)" opacity=".95" /><path d="M-29-29Q0-15 29-29" stroke="#f4f5f6" stroke-width="1.500" fill="none" /><path d="M-12-12q8 20-2 38M8-10q-8 22 6 36" stroke="#e6e7e9" stroke-width="3" fill="none" opacity=".6" /></g>
            <circle v-if="app.running" cy="47" r="4" fill="#0e2440" />
          </svg>
          <b v-if="app.badge" class="badge">{{ app.badge }}</b>
        </div>
      </template>
    </div>
  </div>
</template>

<style>
html, body { margin: 0; }
</style>

<style scoped>
* { box-sizing: border-box; }
.desktop { position: relative; width: 2560px; height: 1600px; overflow: hidden; font-family: Inter, "Noto Sans CJK TC", sans-serif; font-size: 28px; color: #343741; background: linear-gradient(90deg, #5f85b0 0, #4b6785 4%, #6f7f92 50%, #56677b 95%, #77788a 100%); white-space: nowrap; }
.desktop::before { content: ""; position: absolute; right: 0; top: 44px; width: 100%; height: 1454px; background: linear-gradient(180deg, #02030f 0, #080e2b 12%, #0b2048 22%, #20538a 35%, #4f86ad 55%, #68819c 80%, #51677f 100%); }
em, i { font-style: normal; }
svg { display: block; flex: none; }
a { color: #006bb4; }
button { border: 0; padding: 0; font: inherit; }

.menubar { position: relative; display: flex; align-items: center; gap: 39px; height: 44px; padding: 0 46px 0 42px; font-size: 27.500px; color: #000; background: linear-gradient(90deg, #adaeb1 0, #abadb0 55%, #b0b3c0 85%, #adb2c3 100%); }
.menubar > span, .menubar > b { line-height: 44px; }
.apple { margin: -4px 1px 0 0; }
.status { display: flex; align-items: center; margin-left: auto; }
.mem { display: flex; flex-direction: column; width: 49px; margin: 0 23px; font-size: 23px; line-height: 21px; }
.mem b { font-size: 15.500px; line-height: 17px; }
.mem em { font-weight: 500; }
.bt { margin-left: 28px; }
.wifi { margin-left: 31px; }
.pct { margin-left: 25px; font-size: 24px; width: 59px; }
.bat { margin-left: 10px; }
.clock { margin-left: 34px; width: 180px; }
.ime { margin-left: 31px; width: 32px; height: 32px; border-radius: 5px; background: #000; color: #b2b4c0; text-align: center; font-size: 24px; line-height: 32px; }
.find { margin-left: 44px; }
.lst { margin-left: 32px; }

.window { position: relative; margin-top: 4px; width: 2550px; height: 1450px; border-radius: 0 10px 10px 0; overflow: hidden; background: #fff; }
.toolbar { display: flex; align-items: center; height: 76px; padding: 2px 16px 0; background: linear-gradient(#e8e8e8, #d5d5d5); border-bottom: 2px solid #b5b5b5; }
.light { width: 24px; height: 24px; margin-right: 16px; border-radius: 50%; border: 1px solid #e0443e; background: #fc605c; flex: none; }
.yellow { background: #fdbc40; border-color: #dfa023; }
.green { background: #34c84a; border-color: #1dad2b; margin-right: 26px; }
.tbtn { display: flex; align-items: center; justify-content: center; flex: none; height: 46px; border-radius: 8px; background: linear-gradient(#fdfdfd, #f3f3f3); border: 1px solid #cfcfcf; border-bottom: 2px solid #b2b2b2; }
.back, .fwd { width: 51px; margin-right: 1px; }
.side { width: 75px; margin-left: 17px; }
.url { display: flex; align-items: center; justify-content: center; position: relative; width: 1035px; height: 46px; margin: 0 492px 0 411px; padding: 1px 0 0 3px; flex: none; border-radius: 8px; background: linear-gradient(#fdfdfd, #f5f5f5); border: 1px solid #cfcfcf; border-bottom: 2px solid #b2b2b2; font-size: 25.500px; color: #4a4a4a; gap: 8px; }
.reload { position: absolute; right: 12px; top: 7px; }
.act { width: 75px; }
.act + .act { margin-left: 15px; }

.tabbar { display: flex; height: 50px; background: linear-gradient(#c4c4c4, #b6b6b6); border-bottom: 2px solid #a3a3a3; font-size: 22px; line-height: 28px; color: #444; }
.pin { display: flex; align-items: center; justify-content: center; width: 72px; border-right: 2px solid #a5a5a5; }
.fib { width: 62px; justify-content: flex-start; padding-left: 11px; font-size: 17px; font-weight: 900; color: #54c5ef; }
.tab { display: flex; align-items: center; width: 278px; padding-left: 46px; border-right: 2px solid #a5a5a5; }
.active { justify-content: center; padding: 0; background: linear-gradient(#d6d6d6, #cbcbcb); color: #222; }
.plus { display: flex; align-items: center; justify-content: center; flex: 1; }

.kibana { display: flex; height: 1324px; background: #fafbfd; letter-spacing: -.005em; }
.rail { display: flex; flex-direction: column; width: 86px; flex: none; background: #fff; box-shadow: 1px 0 0 1px #e3e7ef, 3px 0 8px rgba(100, 120, 160, .14); }
.rail > div { flex: none; }
.logo { height: 98px; padding: 22px 0 0 20px; border-bottom: 2px solid #d3dae6; background: #fff; }
.recent { display: flex; justify-content: center; height: 98px; padding: 33px 12px 0 0; border-bottom: 2px solid #d3dae6; }
.nav { display: flex; align-items: center; justify-content: center; width: 64px; height: 64px; margin: 16px 0 0 6px; border-radius: 8px; }
.nav.on { background: #f5f7fa; }
.expand { display: flex; justify-content: center; height: 80px; margin-top: 8px; padding: 28px 9px 0 0; background: #fff; border-top: 1px solid #e6e8ee; box-shadow: 0 -16px 24px rgba(120, 130, 150, .1); }

.page { flex: 1; min-width: 0; }
.crumbs { display: flex; align-items: center; height: 98px; padding: 0 0 0 24px; background: #fff; border-bottom: 2px solid #d3dae6; box-shadow: 0 4px 8px rgba(130, 145, 175, .16); position: relative; }
.space { width: 48px; height: 48px; margin-left: 2px; border-radius: 8px; background: #1fbeb2; color: #000; text-align: center; line-height: 46px; font-size: 23px; font-weight: 500; }
.space b { font-weight: 500; }
.vline { align-self: flex-end; width: 2px; height: 64px; margin: 0 32px 0 22px; background: #d3dae6; }
.crumbs::before { content: ""; position: absolute; left: 0; bottom: 0; width: 2px; height: 64px; background: #d3dae6; }
.c1 { color: #69707d; margin-top: -2px; }
.slash { margin: 0 11px 0 13px; }
.c2 { font-weight: 500; color: #1a1c21; margin-top: -2px; }
.tools { display: flex; align-self: stretch; margin-left: auto; }
.tool { display: flex; align-items: center; justify-content: center; width: 96px; background: linear-gradient(#d3dae6, #d3dae6) 0 100% / 2px 64px no-repeat; }
.avatar { width: 48px; height: 48px; border-radius: 50%; background: #f5a35c; color: #000; text-align: center; font-size: 24px; font-weight: 500; line-height: 46px; }

.links { display: flex; gap: 35.500px; align-items: center; height: 70px; padding: 5px 0 0 18px; font-weight: 400; -webkit-text-stroke: .3px #006bb4; }
.query { display: flex; height: 80px; padding-left: 16px; }
.box { display: flex; align-items: center; height: 80px; border: 2px solid #e2e5ee; background: #fbfcfd; box-shadow: 0 3px 4px rgba(130, 145, 175, .12); }
.search { width: 1219px; }
.pre { display: flex; align-items: center; height: 76px; width: 108px; padding-left: 20px; border-right: 2px solid #e2e5ee; gap: 14px; }
.pre .chev { margin-top: 3px; }
.ph { margin: -4px 0 0 24px; color: #69707d; }
.kql { display: flex; align-items: center; margin-left: auto; height: 76px; width: 87px; padding-left: 16px; border-left: 2px solid #e2e5ee; }
.date { width: 928px; margin-left: 17px; padding-right: 16px; }
.cal { width: 108px; }
.range { margin-left: 16px; }
.show { margin-left: auto; }
.refresh { display: flex; align-items: center; width: 236px; height: 80px; margin-left: 32px; padding: 0 0 2px 40px; gap: 17px; border-radius: 8px; background: #0f6cb3; color: #fff; font-size: 32px; box-shadow: 0 3px 4px rgba(60, 100, 150, .3); }
.filters { display: flex; align-items: center; height: 80px; padding-left: 24px; margin-bottom: 10px; }
.filters a { -webkit-text-stroke: .3px #006bb4; }
.dash { width: 20px; height: 2px; margin: 0 18px 0 12px; background: #d3dae6; }

.work { display: flex; height: 986px; }
.editor { position: relative; width: 676px; flex: none; background: #f5f7fb; overflow: hidden; }
.title { height: 64px; padding-left: 16px; line-height: 62px; background: #032b47; color: #fff; font-size: 32px; }
.etabs { display: flex; height: 60px; font-size: 24px; line-height: 63px; }
.etabs .on { width: 85px; padding-left: 16px; border-bottom: 4px solid #006bb4; color: #006bb4; -webkit-text-stroke: .3px #006bb4; }
.off { padding-left: 15px; color: #69707d; }
.play { display: flex; align-items: center; justify-content: center; width: 80px; margin-left: auto; background: #83b1d6; }
.closer { display: flex; align-items: center; justify-content: flex-end; height: 60px; padding-right: 30px; }
.card { width: 612px; height: 850px; margin-left: 16px; padding: 0 16px; border: 2px solid #d3dae6; border-top: 0; border-radius: 8px 8px 0 0; background: #fff; box-shadow: 0 2px 8px rgba(120, 130, 160, .18); }
h3 { margin: 0; height: 80px; line-height: 77px; font-size: 32px; font-weight: 600; color: #1a1c21; }
.inner { width: 576px; height: 760px; padding: 0 16px; border-radius: 8px; background: #fafbfd; }
.split { display: flex; align-items: center; height: 80px; margin-bottom: 20px; padding-left: 4px; }
.split span { margin: -2px 0 0 20px; }
.eye { margin-left: auto; }
.del { margin: 0 14px 0 22px; }
.field { height: 140px; }
.label { display: flex; justify-content: space-between; height: 26px; line-height: 28px; margin-bottom: 14px; font-size: 24px; color: #1a1c21; }
.label b { font-weight: 600; letter-spacing: -.15px; }
.select { display: flex; align-items: center; justify-content: space-between; height: 64px; padding: 0 18px 0 14px; border: 2px solid #e2e5ee; border-radius: 4px; background: #fbfcfd; }
.field:not(.pair .field):nth-child(-n+3) .select span { padding-top: 3px; }
.pair { display: flex; gap: 16px; }
.pair .field { width: 264px; }
.num { padding-right: 20px; }
.toggle { display: flex; margin-top: -3px; }
.sw { position: relative; width: 56px; height: 32px; margin: 1px 16px 0 0; border-radius: 16px; background: #e2e4ea; flex: none; }
.sw::after { content: ""; position: absolute; left: 1px; top: 2px; width: 28px; height: 28px; border-radius: 50%; background: #fff; border: 1.500px solid #c4c6cb; box-shadow: 0 2px 3px rgba(0, 0, 0, .12); }
.toggle p { margin: 1px 0 0; line-height: 32px; }
.scroll { position: absolute; left: 656px; top: 472px; width: 8px; height: 324px; background: #adb3ba; }

.gutter { width: 72px; flex: none; }
.fold { margin: 11px 0 0 30px; }
.grip { margin: 438px 0 0 8px; }
.viz { flex: 1; padding: 32px 32px 0; background: #fff; font-size: 24px; }
.tr { display: grid; grid-template-columns: 1324px 1fr; height: 56px; line-height: 56px; padding-left: 10px; border-bottom: 2px solid #d3dae6; letter-spacing: -.15px; }
.tr > span { height: 54px; }
.tr:nth-child(11) { border-bottom: 0; }
.tr .n { padding-top: 1px; }
.th span { display: flex; align-items: center; gap: 4px; }
.th b { padding-top: 1px; font-size: 23.500px; }
.export { display: flex; align-items: center; height: 40px; margin-top: 54px; padding-left: 8px; gap: 16px; }
.export a { display: flex; align-items: center; gap: 6px; font-size: 26px; margin-right: 7px; }
.export svg { margin-top: -3px; }
.pager { display: flex; justify-content: flex-end; align-items: center; height: 40px; margin-top: 36px; padding-right: 26px; font-size: 27.500px; gap: 36.500px; }
.pager b { color: #006bb4; text-decoration: underline; font-weight: 600; }
.shade { position: absolute; left: 0; right: 0; bottom: 0; height: 96px; background: linear-gradient(rgba(0, 0, 0, 0), rgba(0, 0, 0, .025) 50%, rgba(0, 0, 0, .08)); pointer-events: none; z-index: 2; -webkit-mask-image: linear-gradient(90deg, rgba(0,0,0,.1) 0, #000 120px, #000 2430px, rgba(0,0,0,0) 2530px); }

.dock { position: absolute; left: 74px; top: 1495px; width: 2412px; height: 105px; display: flex; padding: 0 5px 0 6px; border-radius: 12px 12px 0 0; border-top: 1px solid #b5bcc8; background: linear-gradient(90deg, #789bcd 0, #7a9cc6 22%, #93a3bd 32%, #9fa7b9 42%, #889db3 52%, #8299b5 58%, #8299ab 72%, #839db8 88%, #9b9eae 100%); box-shadow: 0 0 6px rgba(0, 0, 0, .25); z-index: 3; }
.defs { position: absolute; }
.app { position: relative; width: 86px; flex: none; }
.dsep { width: 2px; height: 76px; margin: 13px 17px 0 20px; background: #5c6f83; flex: none; }
.badge { position: absolute; left: 54px; top: 7px; width: 31px; height: 31px; border-radius: 50%; background: #f94643; color: #fff; text-align: center; font-size: 18px; font-weight: 400; line-height: 31px; }
.mono { font-family: "Liberation Mono", monospace; }
.ps { font-family: "Open Sans", sans-serif; }
</style>
